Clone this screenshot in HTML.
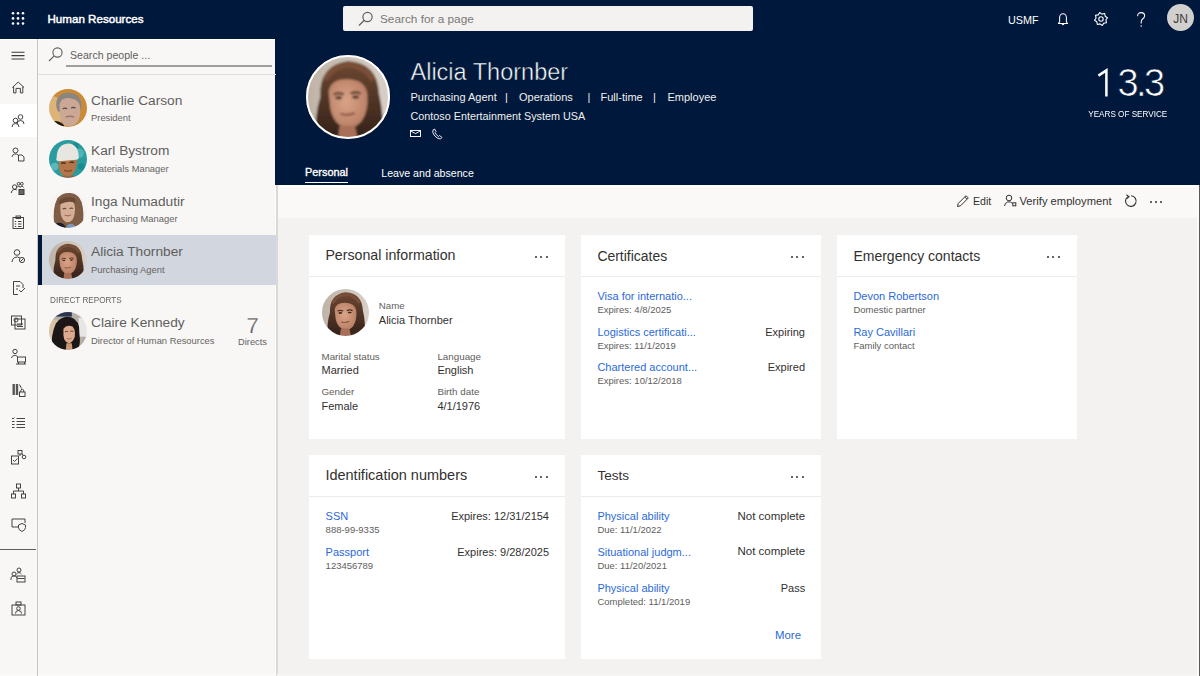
<!DOCTYPE html>
<html><head><meta charset="utf-8"><title>Human Resources</title>
<style>
html,body{margin:0;padding:0;width:1200px;height:676px;overflow:hidden;background:#f3f2f1;}
body{position:relative;font-family:"Liberation Sans",sans-serif;}
.t{position:absolute;white-space:nowrap;line-height:normal;font-family:"Liberation Sans",sans-serif;}
svg{display:block;overflow:visible}
</style></head><body>
<div style="position:absolute;left:0px;top:0px;width:1200px;height:676px;background:#f3f2f1;"></div>
<div style="position:absolute;left:0px;top:0px;width:1200px;height:39px;background:#00183b;"></div>
<div style="position:absolute;left:0px;top:39px;width:37px;height:637px;background:#f8f7f6;"></div>
<div style="position:absolute;left:37px;top:39px;width:1px;height:637px;background:#c8c6c4;"></div>
<div style="position:absolute;left:0px;top:39px;width:37px;height:1px;background:#ffffff;"></div>
<div style="position:absolute;left:38px;top:39px;width:238px;height:637px;background:#f8f7f6;"></div>
<div style="position:absolute;left:38px;top:39px;width:238px;height:1px;background:#ffffff;"></div>
<div style="position:absolute;left:275px;top:39px;width:1px;height:637px;background:#fdfdfd;"></div>
<div style="position:absolute;left:276px;top:39px;width:2px;height:637px;background:#dad9d8;"></div>
<div style="position:absolute;left:275px;top:39px;width:925px;height:146px;background:#00183b;"></div>
<div style="position:absolute;left:278px;top:185px;width:922px;height:33px;background:#faf9f8;"></div>
<div style="position:absolute;left:278px;top:185px;width:922px;height:2px;background:#ffffff;"></div>
<div style="position:absolute;left:1197px;top:185px;width:2px;height:491px;background:#fbfbfa;"></div>
<div style="position:absolute;left:1199px;top:185px;width:1px;height:491px;background:#5a5a5a;"></div>
<div style="position:absolute;left:277px;top:674px;width:920px;height:2px;background:#f6f5f4;"></div>
<div style="position:absolute;left:0px;top:674px;width:37px;height:2px;background:#fbfaf9;"></div>
<div style="position:absolute;left:38px;top:674px;width:238px;height:2px;background:#fbfaf9;"></div>
<svg style="position:absolute;left:0px;top:0px;" width="37" height="39" viewBox="0 0 37 39"><circle cx="13" cy="13.3" r="1.3" fill="#fff"/><circle cx="13" cy="18.4" r="1.3" fill="#fff"/><circle cx="13" cy="23.5" r="1.3" fill="#fff"/><circle cx="18" cy="13.3" r="1.3" fill="#fff"/><circle cx="18" cy="18.4" r="1.3" fill="#fff"/><circle cx="18" cy="23.5" r="1.3" fill="#fff"/><circle cx="23" cy="13.3" r="1.3" fill="#fff"/><circle cx="23" cy="18.4" r="1.3" fill="#fff"/><circle cx="23" cy="23.5" r="1.3" fill="#fff"/></svg>
<div class="t" style="left:47.5px;top:11.50px;font-size:11.6px;color:#ffffff;font-weight:400;-webkit-text-stroke:0.45px #ffffff;">Human Resources</div>
<div style="position:absolute;left:343px;top:6px;width:410px;height:25px;background:#f3f2f1;border-radius:2px;"></div>
<svg style="position:absolute;left:355px;top:10px;" width="22" height="18" viewBox="0 0 22 18"><circle cx="12.5" cy="7" r="4.6" fill="none" stroke="#605e5c" stroke-width="1.2"/><line x1="9.3" y1="10.3" x2="4" y2="15.5" stroke="#605e5c" stroke-width="1.2"/></svg>
<div class="t" style="left:380px;top:12.12px;font-size:11.8px;color:#797775;font-weight:400;">Search for a page</div>
<div class="t" style="left:1008px;top:14.43px;font-size:10.8px;color:#ffffff;font-weight:400;">USMF</div>
<svg style="position:absolute;left:1054px;top:11px;" width="18" height="16" viewBox="0 0 18 16"><path d="M5.6 11 V6.6 a3.4 3.9 0 0 1 6.8 0 V11 L13.6 12.4 H4.4 Z" fill="none" stroke="#fff" stroke-width="1.05" stroke-linejoin="round"/><path d="M7.6 12.8 a1.4 1.4 0 0 0 2.8 0" fill="#fff"/></svg>
<svg style="position:absolute;left:1092px;top:9.5px;" width="18" height="18" viewBox="0 0 18 18"><polygon points="15.47,7.71 13.90,9.98 14.49,12.67 11.78,13.16 10.29,15.47 8.02,13.90 5.33,14.49 4.84,11.78 2.53,10.29 4.10,8.02 3.51,5.33 6.22,4.84 7.71,2.53 9.98,4.10 12.67,3.51 13.16,6.22" fill="none" stroke="#fff" stroke-width="1.1" stroke-linejoin="round"/><circle cx="9" cy="9" r="2.2" fill="none" stroke="#fff" stroke-width="1.1"/></svg>
<svg style="position:absolute;left:1134px;top:11px;" width="14" height="17" viewBox="0 0 14 17"><path d="M3.6 5.2 Q3.6 1.6 7.2 1.6 Q10.6 1.6 10.6 4.8 Q10.6 6.8 8.6 8 Q7.2 9 7.2 11 V12.6" fill="none" stroke="#fff" stroke-width="1.05"/><circle cx="7.2" cy="15" r="0.75" fill="#fff"/></svg>
<div style="position:absolute;left:1167px;top:4px;width:27px;height:27px;border-radius:50%;background:#d2d0ce;"></div>
<div class="t" style="left:1180.5px;transform:translateX(-50%);top:11.64px;font-size:12px;color:#3b3a39;font-weight:400;">JN</div>
<div style="position:absolute;left:0px;top:104px;width:37px;height:33px;background:#ffffff;"></div>
<svg style="position:absolute;left:11px;top:51px;" width="14" height="10" viewBox="0 0 14 10"><path d="M0.5 1.2H13.5M0.5 4.6H13.5M0.5 8H13.5" stroke="#3b3a39" stroke-width="1.1"/></svg>
<svg style="position:absolute;left:10px;top:79px;" width="17" height="16" viewBox="0 0 17 16"><path d="M2.3 8.6 L8.2 3 L14.1 8.6 M3.6 7.4 V13.9 H6 V9.4 H10.4 V13.9 H12.8 V7.4" fill="none" stroke="#3b3a39" stroke-width="0.95"/></svg>
<svg style="position:absolute;left:10px;top:112px;" width="17" height="16" viewBox="0 0 17 16"><circle cx="10.5" cy="5" r="2.3" fill="none" stroke="#3b3a39" stroke-width="0.95"/><path d="M7 12 a3.5 3.5 0 0 1 7 0" fill="none" stroke="#3b3a39" stroke-width="0.95"/><circle cx="5.5" cy="8.5" r="2.3" fill="none" stroke="#3b3a39" stroke-width="0.95"/><path d="M2 15 a3.5 3.5 0 0 1 7 0" fill="none" stroke="#3b3a39" stroke-width="0.95"/></svg>
<svg style="position:absolute;left:10px;top:146px;" width="17" height="16" viewBox="0 0 17 16"><circle cx="5.5" cy="4.5" r="2.5" fill="none" stroke="#3b3a39" stroke-width="0.95"/><path d="M2 11 a3.5 3.5 0 0 1 6 -2" fill="none" stroke="#3b3a39" stroke-width="0.95"/><path d="M8.5 9 H12 L14 11 V15 H8.5 Z" fill="none" stroke="#3b3a39" stroke-width="0.95"/></svg>
<svg style="position:absolute;left:10px;top:180px;" width="17" height="16" viewBox="0 0 17 16"><circle cx="4.6" cy="7" r="2.2" fill="none" stroke="#3b3a39" stroke-width="0.95"/><path d="M1.3 13 a3.5 3.5 0 0 1 5.5 -3" fill="none" stroke="#3b3a39" stroke-width="0.95"/><circle cx="8.6" cy="3.8" r="1.4" fill="none" stroke="#3b3a39" stroke-width="0.95"/><circle cx="11.8" cy="3.8" r="1.4" fill="none" stroke="#3b3a39" stroke-width="0.95"/><path d="M7 7.5 a1.8 1.8 0 0 1 3.4 0 M10.2 7.5 a1.8 1.8 0 0 1 3.4 0" fill="none" stroke="#3b3a39" stroke-width="0.95"/><rect x="9" y="9.5" width="5" height="5" fill="#6a6866" stroke="#3b3a39" stroke-width="1"/></svg>
<svg style="position:absolute;left:10px;top:213.5px;" width="17" height="16" viewBox="0 0 17 16"><rect x="3" y="3.5" width="10.5" height="11" fill="none" stroke="#3b3a39" stroke-width="0.95"/><rect x="6" y="2" width="4.5" height="2.5" fill="none" stroke="#3b3a39" stroke-width="0.95"/><path d="M8 7.5H11.5M8 10H11.5M8 12.5H11.5M4.8 7.5H6.2M4.8 10H6.2M4.8 12.5H6.2" fill="none" stroke="#3b3a39" stroke-width="0.95"/></svg>
<svg style="position:absolute;left:10px;top:247.5px;" width="17" height="16" viewBox="0 0 17 16"><circle cx="7" cy="4.5" r="2.8" fill="none" stroke="#3b3a39" stroke-width="0.95"/><path d="M2 14 a5 5 0 0 1 8 -4" fill="none" stroke="#3b3a39" stroke-width="0.95"/><circle cx="12" cy="12" r="2.6" fill="none" stroke="#3b3a39" stroke-width="0.95"/><path d="M10.3 13.7 L13.7 10.3" fill="none" stroke="#3b3a39" stroke-width="0.95"/></svg>
<svg style="position:absolute;left:10px;top:280px;" width="17" height="16" viewBox="0 0 17 16"><path d="M3.5 1.5 H10 L13 4.5 V8 M3.5 1.5 V14.5 H8" fill="none" stroke="#3b3a39" stroke-width="0.95"/><path d="M9 10 l2 2 l4 -4" fill="none" stroke="#3b3a39" stroke-width="0.95"/><path d="M6 6 H10 M6 9 H8" fill="none" stroke="#3b3a39" stroke-width="0.95"/></svg>
<svg style="position:absolute;left:10px;top:314px;" width="17" height="16" viewBox="0 0 17 16"><rect x="1.5" y="2" width="10" height="9" fill="none" stroke="#3b3a39" stroke-width="0.95"/><rect x="5" y="5" width="10" height="10" fill="none" stroke="#3b3a39" stroke-width="0.95"/><circle cx="6" cy="6" r="2" fill="none" stroke="#3b3a39" stroke-width="0.95"/><path d="M7 10H13M7 12.5H13" fill="none" stroke="#3b3a39" stroke-width="0.95"/></svg>
<svg style="position:absolute;left:10px;top:348px;" width="17" height="16" viewBox="0 0 17 16"><circle cx="5" cy="3.5" r="2.2" fill="none" stroke="#3b3a39" stroke-width="0.95"/><path d="M1.5 10 a3.5 3.5 0 0 1 6 -1.5" fill="none" stroke="#3b3a39" stroke-width="0.95"/><rect x="7.5" y="9" width="8" height="5" fill="none" stroke="#3b3a39" stroke-width="0.95"/><path d="M8.5 14 V16 M14.5 14 V16 M6 16 H16" fill="none" stroke="#3b3a39" stroke-width="0.95"/></svg>
<svg style="position:absolute;left:10px;top:382px;" width="17" height="16" viewBox="0 0 17 16"><rect x="2.5" y="2" width="2.4" height="11" fill="#3b3a39" opacity="0.85"/><rect x="5.8" y="2" width="2.4" height="11" fill="#3b3a39" opacity="0.85"/><path d="M9.5 2.5 L11.5 6.5" fill="none" stroke="#3b3a39" stroke-width="0.95"/><rect x="9.5" y="10" width="5.5" height="4.5" fill="none" stroke="#3b3a39" stroke-width="0.95"/><path d="M10.8 10 V8.8 a1.45 1.45 0 0 1 2.9 0 V10" fill="none" stroke="#3b3a39" stroke-width="0.95"/></svg>
<svg style="position:absolute;left:10px;top:415px;" width="17" height="16" viewBox="0 0 17 16"><path d="M6.5 3.5H15M6.5 6.5H15M6.5 9.5H15M6.5 12.5H15" fill="none" stroke="#3b3a39" stroke-width="0.95"/><path d="M2 3 L3 4 L4.5 2.5 M2 6.5H4.5 M2 9.5H4.5 M2 12.5H4.5" fill="none" stroke="#3b3a39" stroke-width="0.95"/></svg>
<svg style="position:absolute;left:10px;top:449px;" width="17" height="16" viewBox="0 0 17 16"><rect x="1.5" y="7" width="7" height="8" fill="none" stroke="#3b3a39" stroke-width="0.95"/><path d="M3 11 l1.5 1.5 l3 -3" fill="none" stroke="#3b3a39" stroke-width="0.95"/><rect x="8" y="1.5" width="4" height="3.5" fill="none" stroke="#3b3a39" stroke-width="0.95"/><circle cx="14" cy="8" r="1.8" fill="none" stroke="#3b3a39" stroke-width="0.95"/><path d="M10 5 V7 M12 5 L13.3 6.5" fill="none" stroke="#3b3a39" stroke-width="0.95"/></svg>
<svg style="position:absolute;left:10px;top:483px;" width="17" height="16" viewBox="0 0 17 16"><rect x="6.5" y="1" width="4" height="4" fill="none" stroke="#3b3a39" stroke-width="0.95"/><rect x="1.5" y="11" width="4" height="4" fill="none" stroke="#3b3a39" stroke-width="0.95"/><rect x="11.5" y="11" width="4" height="4" fill="none" stroke="#3b3a39" stroke-width="0.95"/><path d="M8.5 5 V8 M3.5 11 V8 H13.5 V11" fill="none" stroke="#3b3a39" stroke-width="0.95"/></svg>
<svg style="position:absolute;left:10px;top:516px;" width="17" height="16" viewBox="0 0 17 16"><path d="M9 11 H2 V3 H15 V7" fill="none" stroke="#3b3a39" stroke-width="0.95"/><path d="M12 7.5 L15.5 9 V11.5 Q15.5 14 12 15.5 Q8.5 14 8.5 11.5 V9 Z" fill="none" stroke="#3b3a39" stroke-width="0.95"/></svg>
<div style="position:absolute;left:0px;top:549px;width:36px;height:1px;background:#605e5c;"></div>
<svg style="position:absolute;left:10px;top:567px;" width="17" height="16" viewBox="0 0 17 16"><circle cx="9" cy="3" r="2" fill="none" stroke="#3b3a39" stroke-width="0.95"/><circle cx="4" cy="7" r="2" fill="none" stroke="#3b3a39" stroke-width="0.95"/><path d="M1 13 a3 3 0 0 1 6 -2" fill="none" stroke="#3b3a39" stroke-width="0.95"/><rect x="7" y="9" width="8" height="6" fill="none" stroke="#3b3a39" stroke-width="0.95"/><path d="M7.5 11.5H14.5" fill="none" stroke="#3b3a39" stroke-width="0.95"/><path d="M6.5 7 a3 3 0 0 1 5 0" fill="none" stroke="#3b3a39" stroke-width="0.95"/></svg>
<svg style="position:absolute;left:10px;top:600px;" width="17" height="16" viewBox="0 0 17 16"><rect x="2" y="5" width="13" height="10" fill="none" stroke="#3b3a39" stroke-width="0.95"/><rect x="6" y="2" width="5" height="3" fill="none" stroke="#3b3a39" stroke-width="0.95"/><circle cx="8.5" cy="8.5" r="1.8" fill="none" stroke="#3b3a39" stroke-width="0.95"/><path d="M5.5 13.5 a3 3 0 0 1 6 0" fill="none" stroke="#3b3a39" stroke-width="0.95"/></svg>
<svg style="position:absolute;left:47px;top:46px;" width="18" height="18" viewBox="0 0 18 18"><circle cx="10.5" cy="6.5" r="4.6" fill="none" stroke="#605e5c" stroke-width="1.1"/><line x1="7.2" y1="9.8" x2="2" y2="15" stroke="#605e5c" stroke-width="1.1"/></svg>
<div class="t" style="left:70px;top:49.41px;font-size:10.6px;color:#605e5c;font-weight:400;">Search people ...</div>
<div style="position:absolute;left:66px;top:65px;width:206px;height:1.5px;background:#a19f9d;"></div>
<div style="position:absolute;left:38px;top:74px;width:238px;height:1px;background:#e1dfdd;"></div>
<div style="position:absolute;left:38px;top:235px;width:238px;height:50px;background:#d2d6de;"></div>
<div style="position:absolute;left:38px;top:235px;width:3.5px;height:50px;background:#00183b;"></div>
<svg style="position:absolute;left:49px;top:89.0px" width="38" height="38" viewBox="0 0 100 100"><defs><clipPath id="c53"><circle cx="50" cy="50" r="50"/></clipPath><filter id="bc53" x="-10%" y="-10%" width="120%" height="120%"><feGaussianBlur stdDeviation="1.3"/></filter></defs><g clip-path="url(#c53)"><g filter="url(#bc53)"><rect width="100" height="100" fill="#c98b36"/><ellipse cx="14" cy="62" rx="22" ry="42" fill="#dcb478"/><path d="M20 50 Q14 16 46 10 Q80 8 86 40 L84 56 L24 60 Z" fill="#8a8580"/><path d="M28 40 Q32 22 54 24 Q80 28 82 48 Q84 74 74 88 Q62 100 46 98 Q30 92 28 66 Z" fill="#cba896"/><path d="M36 52 Q42 49 48 52 M58 50 Q64 47 70 50" stroke="#5a4840" stroke-width="3.5" fill="none"/><path d="M44 74 Q54 70 66 74" stroke="#9a7464" stroke-width="4" fill="none"/><path d="M0 100 L6 86 Q24 80 40 96 L38 100 Z" fill="#1c1816"/><path d="M82 100 L90 88 L100 100 Z" fill="#1c1816"/></g></g></svg>
<div class="t" style="left:91px;top:92.60px;font-size:13.7px;color:#605e5c;font-weight:400;">Charlie Carson</div>
<div class="t" style="left:91px;top:112.49px;font-size:9.4px;color:#65635f;font-weight:400;">President</div>
<svg style="position:absolute;left:49px;top:139.5px" width="38" height="38" viewBox="0 0 100 100"><defs><clipPath id="c56"><circle cx="50" cy="50" r="50"/></clipPath><filter id="bc56" x="-10%" y="-10%" width="120%" height="120%"><feGaussianBlur stdDeviation="1.3"/></filter></defs><g clip-path="url(#c56)"><g filter="url(#bc56)"><rect width="100" height="100" fill="#2a9c9e"/><circle cx="80" cy="35" r="12" fill="#4cb6b6"/><circle cx="15" cy="70" r="10" fill="#5ab8b8"/><circle cx="85" cy="70" r="9" fill="#1d8a8e"/><circle cx="70" cy="15" r="8" fill="#1d8a8e"/><path d="M26 52 Q22 92 46 98 Q72 96 74 52 Z" fill="#b47448"/><path d="M32 62 Q38 58 44 62 M54 60 Q60 56 66 60" stroke="#4a3020" stroke-width="3.5" fill="none"/><path d="M40 80 Q50 84 60 80" stroke="#7a4a30" stroke-width="3" fill="none"/><path d="M20 48 Q20 12 50 9 Q78 11 78 44 Q80 50 72 52 L26 56 Q16 54 20 48 Z" fill="#e8e6e0"/><path d="M28 98 Q40 90 50 96 Q62 90 74 98 L74 100 L28 100 Z" fill="#8a6a50"/></g></g></svg>
<div class="t" style="left:91px;top:143.10px;font-size:13.7px;color:#605e5c;font-weight:400;">Karl Bystrom</div>
<div class="t" style="left:91px;top:162.99px;font-size:9.4px;color:#65635f;font-weight:400;">Materials Manager</div>
<svg style="position:absolute;left:49px;top:190.0px" width="38" height="38" viewBox="0 0 100 100"><defs><clipPath id="c59"><circle cx="50" cy="50" r="50"/></clipPath><filter id="bc59" x="-10%" y="-10%" width="120%" height="120%"><feGaussianBlur stdDeviation="1.3"/></filter></defs><g clip-path="url(#c59)"><g filter="url(#bc59)"><rect width="100" height="100" fill="#f6f4f2"/><path d="M14 92 Q8 50 22 22 Q36 6 56 8 Q78 10 86 32 Q94 62 88 94 L70 98 L30 98 Z" fill="#7e5c44"/><path d="M30 34 Q36 26 50 27 Q66 28 68 42 Q70 64 62 78 Q52 88 44 84 Q30 76 30 52 Z" fill="#d6ae96"/><path d="M26 30 Q40 14 68 22 L70 34 Q50 26 28 38 Z" fill="#6a4a34"/><path d="M36 50 Q41 47 45 50 M54 49 Q59 46 63 49" stroke="#6a4a3a" stroke-width="3" fill="none"/><path d="M41 66 Q50 70 58 66" stroke="#a06a5a" stroke-width="3" fill="none"/><path d="M8 100 L18 88 Q36 82 46 100 Z" fill="#1e1e26"/><path d="M44 100 Q50 86 64 90 L74 100 Z" fill="#7c96b4"/></g></g></svg>
<div class="t" style="left:91px;top:193.60px;font-size:13.7px;color:#605e5c;font-weight:400;">Inga Numadutir</div>
<div class="t" style="left:91px;top:213.49px;font-size:9.4px;color:#65635f;font-weight:400;">Purchasing Manager</div>
<svg style="position:absolute;left:49px;top:240.5px" width="38" height="38" viewBox="0 0 100 100"><defs><clipPath id="c62"><circle cx="50" cy="50" r="50"/></clipPath><filter id="bc62" x="-10%" y="-10%" width="120%" height="120%"><feGaussianBlur stdDeviation="1.3"/></filter></defs><g clip-path="url(#c62)"><g filter="url(#bc62)"><defs><linearGradient id="gc62" x1="0" x2="1"><stop offset="0" stop-color="#bfb3a6"/><stop offset="1" stop-color="#d8d0c8"/></linearGradient><radialGradient id="fc62" cx="0.45" cy="0.45" r="0.6"><stop offset="0" stop-color="#daa488"/><stop offset="1" stop-color="#b87e64"/></radialGradient></defs><rect width="100" height="100" fill="url(#gc62)"/><linearGradient id="hc62" x1="0" y1="0" x2="0" y2="1"><stop offset="0" stop-color="#6e4832"/><stop offset="1" stop-color="#33211a"/></linearGradient><path d="M12 100 Q10 72 17 50 Q15 12 50 7 Q85 9 87 46 Q93 72 91 100 Z" fill="url(#hc62)"/><path d="M22 30 Q34 12 52 12 Q70 14 80 30" stroke="#7a5038" stroke-width="6" fill="none"/><path d="M27 44 Q29 29 48 29 Q70 29 73 46 Q75 66 66 79 Q57 89 48 87 Q33 83 29 64 Z" fill="url(#fc62)"/><path d="M33 47 Q39 44 45 47 M53 46 Q59 43 65 46" stroke="#4a3024" stroke-width="2.5" fill="none"/><ellipse cx="39" cy="51" rx="4" ry="1.8" fill="#3a261c"/><ellipse cx="59" cy="50" rx="4" ry="1.8" fill="#3a261c"/><path d="M41 70 Q49 73 58 69" stroke="#8e5646" stroke-width="2.6" fill="none"/><path d="M40 84 L58 84 L62 100 L38 100 Z" fill="#a87058"/><path d="M62 100 Q70 86 86 84 L100 100 Z" fill="#3e2a1e"/></g></g></svg>
<div class="t" style="left:91px;top:244.10px;font-size:13.7px;color:#605e5c;font-weight:400;">Alicia Thornber</div>
<div class="t" style="left:91px;top:263.99px;font-size:9.4px;color:#65635f;font-weight:400;">Purchasing Agent</div>
<div class="t" style="left:49.5px;top:295.25px;font-size:9.0px;color:#65635f;font-weight:400;transform:scaleX(0.905);transform-origin:0 50%;">DIRECT REPORTS</div>
<svg style="position:absolute;left:49px;top:311.5px" width="38" height="38" viewBox="0 0 100 100"><defs><clipPath id="c66"><circle cx="50" cy="50" r="50"/></clipPath><filter id="bc66" x="-10%" y="-10%" width="120%" height="120%"><feGaussianBlur stdDeviation="1.3"/></filter></defs><g clip-path="url(#c66)"><g filter="url(#bc66)"><rect width="100" height="100" fill="#b6b0a8"/><rect x="0" y="20" width="22" height="60" fill="#d8c4a4"/><rect x="78" y="15" width="22" height="50" fill="#e8e6e2"/><rect x="0" y="0" width="60" height="12" fill="#2a3450"/><path d="M8 100 Q4 60 18 30 Q34 8 58 14 Q82 22 80 56 Q84 86 76 100 Z" fill="#1e1814"/><path d="M38 44 Q46 32 62 38 Q70 48 68 64 Q64 80 52 82 Q40 80 38 62 Z" fill="#dcaa8c"/><path d="M42 52 Q46 50 50 52 M56 51 Q60 49 64 51" stroke="#5a3a2a" stroke-width="2.5" fill="none"/><path d="M46 70 Q53 73 60 69" stroke="#a8705a" stroke-width="2.5" fill="none"/><path d="M46 82 L60 82 L62 100 L44 100 Z" fill="#c99878"/></g></g></svg>
<div class="t" style="left:91px;top:315.20px;font-size:13.7px;color:#605e5c;font-weight:400;">Claire Kennedy</div>
<div class="t" style="left:91px;top:335.49px;font-size:9.4px;color:#65635f;font-weight:400;">Director of Human Resources</div>
<div class="t" style="left:252.5px;transform:translateX(-50%);top:313.09px;font-size:22px;color:#605e5c;font-weight:400;-webkit-text-stroke:0.25px #f8f7f6;">7</div>
<div class="t" style="left:252.5px;transform:translateX(-50%);top:336.58px;font-size:9.3px;color:#65635f;font-weight:400;">Directs</div>
<svg style="position:absolute;left:305.5px;top:55px" width="84" height="84" viewBox="0 0 100 100"><defs><clipPath id="c71"><circle cx="50" cy="50" r="50"/></clipPath><filter id="bc71" x="-10%" y="-10%" width="120%" height="120%"><feGaussianBlur stdDeviation="1.3"/></filter></defs><g clip-path="url(#c71)"><g filter="url(#bc71)"><defs><linearGradient id="gc71" x1="0" x2="1"><stop offset="0" stop-color="#bfb3a6"/><stop offset="1" stop-color="#d8d0c8"/></linearGradient><radialGradient id="fc71" cx="0.45" cy="0.45" r="0.6"><stop offset="0" stop-color="#daa488"/><stop offset="1" stop-color="#b87e64"/></radialGradient></defs><rect width="100" height="100" fill="url(#gc71)"/><linearGradient id="hc71" x1="0" y1="0" x2="0" y2="1"><stop offset="0" stop-color="#6e4832"/><stop offset="1" stop-color="#33211a"/></linearGradient><path d="M12 100 Q10 72 17 50 Q15 12 50 7 Q85 9 87 46 Q93 72 91 100 Z" fill="url(#hc71)"/><path d="M22 30 Q34 12 52 12 Q70 14 80 30" stroke="#7a5038" stroke-width="6" fill="none"/><path d="M27 44 Q29 29 48 29 Q70 29 73 46 Q75 66 66 79 Q57 89 48 87 Q33 83 29 64 Z" fill="url(#fc71)"/><path d="M33 47 Q39 44 45 47 M53 46 Q59 43 65 46" stroke="#4a3024" stroke-width="2.5" fill="none"/><ellipse cx="39" cy="51" rx="4" ry="1.8" fill="#3a261c"/><ellipse cx="59" cy="50" rx="4" ry="1.8" fill="#3a261c"/><path d="M41 70 Q49 73 58 69" stroke="#8e5646" stroke-width="2.6" fill="none"/><path d="M40 84 L58 84 L62 100 L38 100 Z" fill="#a87058"/><path d="M62 100 Q70 86 86 84 L100 100 Z" fill="#3e2a1e"/></g></g><circle cx="50" cy="50" r="48.80952380952381" fill="none" stroke="#ffffff" stroke-width="2.380952380952381"/></svg>
<div class="t" style="left:410.5px;top:58.73px;font-size:23.5px;color:#ffffff;font-weight:400;-webkit-text-stroke:0.5px #00183b;">Alicia Thornber</div>
<div class="t" style="left:410.5px;top:91.05px;font-size:11px;color:#f0f0f0;font-weight:400;">Purchasing Agent</div>
<div class="t" style="left:505px;top:91.05px;font-size:11px;color:#f0f0f0;font-weight:400;">|</div>
<div class="t" style="left:519px;top:91.05px;font-size:11px;color:#f0f0f0;font-weight:400;">Operations</div>
<div class="t" style="left:587.5px;top:91.05px;font-size:11px;color:#f0f0f0;font-weight:400;">|</div>
<div class="t" style="left:600.5px;top:91.05px;font-size:11px;color:#f0f0f0;font-weight:400;">Full-time</div>
<div class="t" style="left:653px;top:91.05px;font-size:11px;color:#f0f0f0;font-weight:400;">|</div>
<div class="t" style="left:667.5px;top:91.05px;font-size:11px;color:#f0f0f0;font-weight:400;">Employee</div>
<div class="t" style="left:410.5px;top:110.23px;font-size:10.8px;color:#f0f0f0;font-weight:400;">Contoso Entertainment System USA</div>
<svg style="position:absolute;left:409px;top:129px;" width="14" height="9" viewBox="0 0 14 9"><rect x="1.5" y="1.5" width="10" height="6" fill="none" stroke="#fff" stroke-width="0.95"/><path d="M1.8 2 L6.5 4.6 L11.2 2" fill="none" stroke="#fff" stroke-width="0.95"/></svg>
<svg style="position:absolute;left:431px;top:128px;" width="13" height="12" viewBox="0 0 13 12"><path d="M2 2 Q1 4 3 7 Q6 11 9.5 11 L11 9.5 L8.5 7.5 L7.5 8.5 Q5 7 4 4.5 L5 3.5 L3.5 1 Z" fill="none" stroke="#fff" stroke-width="0.9" stroke-linejoin="round"/></svg>
<div class="t" style="right:37.5px;top:62.01px;font-size:38px;color:#ffffff;font-weight:400;letter-spacing:-2.6px;-webkit-text-stroke:0.7px #00183b;">3.3</div>
<svg style="position:absolute;left:1095px;top:66px;" width="16" height="32" viewBox="0 0 16 32"><path d="M3.4 9.6 L11.4 4.4 V30.4" fill="none" stroke="#fff" stroke-width="2.5" stroke-linejoin="miter"/></svg>
<div class="t" style="right:32.5px;top:108.87px;font-size:9.2px;color:#ffffff;font-weight:400;transform:scaleX(0.885);transform-origin:100% 50%;">YEARS OF SERVICE</div>
<div class="t" style="left:305px;top:166.44px;font-size:10.9px;color:#ffffff;font-weight:400;-webkit-text-stroke:0.35px #ffffff;">Personal</div>
<div style="position:absolute;left:305px;top:181.6px;width:43px;height:1.8px;background:#ffffff;"></div>
<div class="t" style="left:381.3px;top:166.71px;font-size:10.6px;color:#ffffff;font-weight:400;">Leave and absence</div>
<svg style="position:absolute;left:955px;top:194px;" width="16" height="14" viewBox="0 0 16 14"><path d="M2.5 12.5 L3.2 9.5 L11 1.7 L13.3 4 L5.5 11.8 Z M9.8 3 L12 5.2" fill="none" stroke="#323130" stroke-width="1"/></svg>
<div class="t" style="left:973px;top:195.41px;font-size:10.6px;color:#323130;font-weight:400;">Edit</div>
<svg style="position:absolute;left:1003px;top:194px;" width="15" height="14" viewBox="0 0 15 14"><circle cx="6" cy="4" r="2.8" fill="none" stroke="#323130" stroke-width="1"/><path d="M1.5 12 a4.5 4.5 0 0 1 8 -2.5" fill="none" stroke="#323130" stroke-width="1"/><rect x="9.8" y="8.8" width="3" height="3" fill="none" stroke="#323130" stroke-width="1"/></svg>
<div class="t" style="left:1019.5px;top:194.86px;font-size:11.2px;color:#323130;font-weight:400;">Verify employment</div>
<svg style="position:absolute;left:1123px;top:193px;" width="16" height="16" viewBox="0 0 16 16"><path d="M5 3.6 A5.3 5.3 0 1 0 8 2.8" fill="none" stroke="#323130" stroke-width="1.1"/><path d="M3.5 1.8 L6 3.8 L3.6 5.9" fill="none" stroke="#323130" stroke-width="1.1"/></svg>
<div style="position:absolute;left:1150px;top:201px;width:2px;height:2px;border-radius:1px;background:#323130"></div>
<div style="position:absolute;left:1155.2px;top:201px;width:2px;height:2px;border-radius:1px;background:#323130"></div>
<div style="position:absolute;left:1160.4px;top:201px;width:2px;height:2px;border-radius:1px;background:#323130"></div>
<div style="position:absolute;left:309px;top:235px;width:256px;height:204px;background:#ffffff;"></div>
<div style="position:absolute;left:309px;top:275.5px;width:256px;height:1px;background:#edebe9;"></div>
<div class="t" style="left:325.4px;top:247.35px;font-size:14.2px;color:#323130;font-weight:400;">Personal information</div>
<div style="position:absolute;left:535.3px;top:256px;width:2px;height:2px;border-radius:1px;background:#323130"></div>
<div style="position:absolute;left:540.4px;top:256px;width:2px;height:2px;border-radius:1px;background:#323130"></div>
<div style="position:absolute;left:545.5px;top:256px;width:2px;height:2px;border-radius:1px;background:#323130"></div>
<div style="position:absolute;left:581px;top:235px;width:240px;height:204px;background:#ffffff;"></div>
<div style="position:absolute;left:581px;top:275.5px;width:240px;height:1px;background:#edebe9;"></div>
<div class="t" style="left:597.4px;top:247.58px;font-size:13.95px;color:#323130;font-weight:400;">Certificates</div>
<div style="position:absolute;left:791.3px;top:256px;width:2px;height:2px;border-radius:1px;background:#323130"></div>
<div style="position:absolute;left:796.4px;top:256px;width:2px;height:2px;border-radius:1px;background:#323130"></div>
<div style="position:absolute;left:801.5px;top:256px;width:2px;height:2px;border-radius:1px;background:#323130"></div>
<div style="position:absolute;left:837px;top:235px;width:240px;height:204px;background:#ffffff;"></div>
<div style="position:absolute;left:837px;top:275.5px;width:240px;height:1px;background:#edebe9;"></div>
<div class="t" style="left:853.4px;top:247.53px;font-size:14.0px;color:#323130;font-weight:400;">Emergency contacts</div>
<div style="position:absolute;left:1047.3px;top:256px;width:2px;height:2px;border-radius:1px;background:#323130"></div>
<div style="position:absolute;left:1052.4px;top:256px;width:2px;height:2px;border-radius:1px;background:#323130"></div>
<div style="position:absolute;left:1057.5px;top:256px;width:2px;height:2px;border-radius:1px;background:#323130"></div>
<div style="position:absolute;left:309px;top:455px;width:256px;height:204px;background:#ffffff;"></div>
<div style="position:absolute;left:309px;top:495.5px;width:256px;height:1px;background:#edebe9;"></div>
<div class="t" style="left:325.4px;top:467.08px;font-size:14.5px;color:#323130;font-weight:400;">Identification numbers</div>
<div style="position:absolute;left:535.3px;top:476px;width:2px;height:2px;border-radius:1px;background:#323130"></div>
<div style="position:absolute;left:540.4px;top:476px;width:2px;height:2px;border-radius:1px;background:#323130"></div>
<div style="position:absolute;left:545.5px;top:476px;width:2px;height:2px;border-radius:1px;background:#323130"></div>
<div style="position:absolute;left:581px;top:455px;width:240px;height:204px;background:#ffffff;"></div>
<div style="position:absolute;left:581px;top:495.5px;width:240px;height:1px;background:#edebe9;"></div>
<div class="t" style="left:597.4px;top:467.89px;font-size:13.6px;color:#323130;font-weight:400;">Tests</div>
<div style="position:absolute;left:791.3px;top:476px;width:2px;height:2px;border-radius:1px;background:#323130"></div>
<div style="position:absolute;left:796.4px;top:476px;width:2px;height:2px;border-radius:1px;background:#323130"></div>
<div style="position:absolute;left:801.5px;top:476px;width:2px;height:2px;border-radius:1px;background:#323130"></div>
<svg style="position:absolute;left:322px;top:289px" width="47" height="47" viewBox="0 0 100 100"><defs><clipPath id="c127"><circle cx="50" cy="50" r="50"/></clipPath><filter id="bc127" x="-10%" y="-10%" width="120%" height="120%"><feGaussianBlur stdDeviation="1.3"/></filter></defs><g clip-path="url(#c127)"><g filter="url(#bc127)"><defs><linearGradient id="gc127" x1="0" x2="1"><stop offset="0" stop-color="#bfb3a6"/><stop offset="1" stop-color="#d8d0c8"/></linearGradient><radialGradient id="fc127" cx="0.45" cy="0.45" r="0.6"><stop offset="0" stop-color="#daa488"/><stop offset="1" stop-color="#b87e64"/></radialGradient></defs><rect width="100" height="100" fill="url(#gc127)"/><linearGradient id="hc127" x1="0" y1="0" x2="0" y2="1"><stop offset="0" stop-color="#6e4832"/><stop offset="1" stop-color="#33211a"/></linearGradient><path d="M12 100 Q10 72 17 50 Q15 12 50 7 Q85 9 87 46 Q93 72 91 100 Z" fill="url(#hc127)"/><path d="M22 30 Q34 12 52 12 Q70 14 80 30" stroke="#7a5038" stroke-width="6" fill="none"/><path d="M27 44 Q29 29 48 29 Q70 29 73 46 Q75 66 66 79 Q57 89 48 87 Q33 83 29 64 Z" fill="url(#fc127)"/><path d="M33 47 Q39 44 45 47 M53 46 Q59 43 65 46" stroke="#4a3024" stroke-width="2.5" fill="none"/><ellipse cx="39" cy="51" rx="4" ry="1.8" fill="#3a261c"/><ellipse cx="59" cy="50" rx="4" ry="1.8" fill="#3a261c"/><path d="M41 70 Q49 73 58 69" stroke="#8e5646" stroke-width="2.6" fill="none"/><path d="M40 84 L58 84 L62 100 L38 100 Z" fill="#a87058"/><path d="M62 100 Q70 86 86 84 L100 100 Z" fill="#3e2a1e"/></g></g></svg>
<div class="t" style="left:378.8px;top:300.22px;font-size:9.7px;color:#605e5c;font-weight:400;">Name</div>
<div class="t" style="left:378.8px;top:313.75px;font-size:11px;color:#323130;font-weight:400;">Alicia Thornber</div>
<div class="t" style="left:321.5px;top:351.13px;font-size:9.8px;color:#605e5c;font-weight:400;">Marital status</div>
<div class="t" style="left:321.5px;top:364.05px;font-size:11px;color:#323130;font-weight:400;">Married</div>
<div class="t" style="left:437.4px;top:351.13px;font-size:9.8px;color:#605e5c;font-weight:400;">Language</div>
<div class="t" style="left:437.4px;top:364.05px;font-size:11px;color:#323130;font-weight:400;">English</div>
<div class="t" style="left:321.5px;top:386.43px;font-size:9.8px;color:#605e5c;font-weight:400;">Gender</div>
<div class="t" style="left:321.5px;top:399.65px;font-size:11px;color:#323130;font-weight:400;">Female</div>
<div class="t" style="left:437.4px;top:386.43px;font-size:9.8px;color:#605e5c;font-weight:400;">Birth date</div>
<div class="t" style="left:437.4px;top:399.65px;font-size:11px;color:#323130;font-weight:400;">4/1/1976</div>
<div class="t" style="left:597.4px;top:289.94px;font-size:11px;color:#2b6ad8;font-weight:400;">Visa for internatio...</div>
<div class="t" style="left:597.4px;top:303.80px;font-size:9.5px;color:#605e5c;font-weight:400;">Expires: 4/8/2025</div>
<div class="t" style="left:597.4px;top:325.64px;font-size:11px;color:#2b6ad8;font-weight:400;">Logistics certificati...</div>
<div class="t" style="left:597.4px;top:339.50px;font-size:9.5px;color:#605e5c;font-weight:400;">Expires: 11/1/2019</div>
<div class="t" style="right:395px;top:325.64px;font-size:11px;color:#323130;font-weight:400;">Expiring</div>
<div class="t" style="left:597.4px;top:361.34px;font-size:11px;color:#2b6ad8;font-weight:400;">Chartered account...</div>
<div class="t" style="left:597.4px;top:375.20px;font-size:9.5px;color:#605e5c;font-weight:400;">Expires: 10/12/2018</div>
<div class="t" style="right:395px;top:361.34px;font-size:11px;color:#323130;font-weight:400;">Expired</div>
<div class="t" style="left:853.4px;top:289.94px;font-size:11px;color:#2b6ad8;font-weight:400;">Devon Robertson</div>
<div class="t" style="left:853.4px;top:303.80px;font-size:9.5px;color:#605e5c;font-weight:400;">Domestic partner</div>
<div class="t" style="left:853.4px;top:325.64px;font-size:11px;color:#2b6ad8;font-weight:400;">Ray Cavillari</div>
<div class="t" style="left:853.4px;top:339.50px;font-size:9.5px;color:#605e5c;font-weight:400;">Family contact</div>
<div class="t" style="left:325.6px;top:510.25px;font-size:11px;color:#2b6ad8;font-weight:400;">SSN</div>
<div class="t" style="left:325.6px;top:524.10px;font-size:9.5px;color:#605e5c;font-weight:400;">888-99-9335</div>
<div class="t" style="right:651px;top:510.25px;font-size:11px;color:#323130;font-weight:400;">Expires: 12/31/2154</div>
<div class="t" style="left:325.6px;top:545.95px;font-size:11px;color:#2b6ad8;font-weight:400;">Passport</div>
<div class="t" style="left:325.6px;top:559.80px;font-size:9.5px;color:#605e5c;font-weight:400;">123456789</div>
<div class="t" style="right:651px;top:545.95px;font-size:11px;color:#323130;font-weight:400;">Expires: 9/28/2025</div>
<div class="t" style="left:597.4px;top:510.25px;font-size:11px;color:#2b6ad8;font-weight:400;">Physical ability</div>
<div class="t" style="left:597.4px;top:524.10px;font-size:9.5px;color:#605e5c;font-weight:400;">Due: 11/1/2022</div>
<div class="t" style="right:394.79999999999995px;top:509.79px;font-size:11.5px;color:#323130;font-weight:400;">Not complete</div>
<div class="t" style="left:597.4px;top:545.95px;font-size:11px;color:#2b6ad8;font-weight:400;">Situational judgm...</div>
<div class="t" style="left:597.4px;top:559.80px;font-size:9.5px;color:#605e5c;font-weight:400;">Due: 11/20/2021</div>
<div class="t" style="right:394.79999999999995px;top:545.49px;font-size:11.5px;color:#323130;font-weight:400;">Not complete</div>
<div class="t" style="left:597.4px;top:581.64px;font-size:11px;color:#2b6ad8;font-weight:400;">Physical ability</div>
<div class="t" style="left:597.4px;top:595.50px;font-size:9.5px;color:#605e5c;font-weight:400;">Completed: 11/1/2019</div>
<div class="t" style="right:394.79999999999995px;top:581.64px;font-size:11px;color:#323130;font-weight:400;">Pass</div>
<div class="t" style="right:399px;top:628.88px;font-size:11.4px;color:#2b6ad8;font-weight:400;">More</div>
</body></html>
